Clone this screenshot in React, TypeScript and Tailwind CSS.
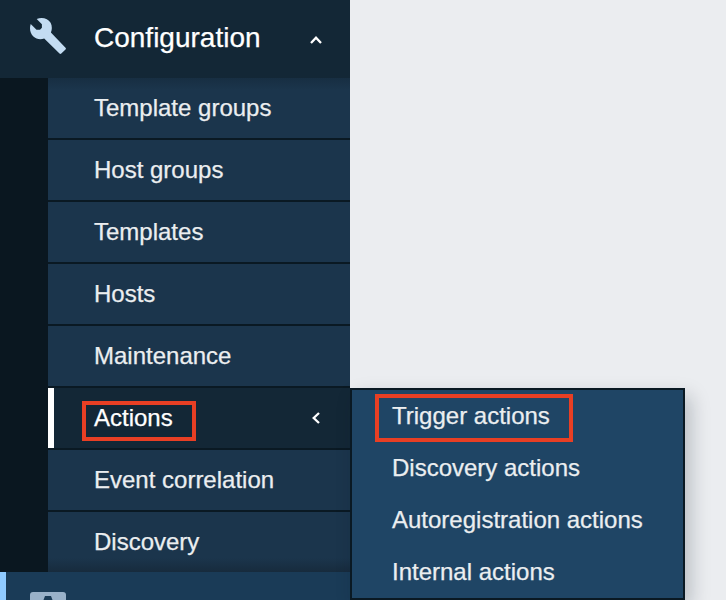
const before = ['Template groups', 'Host groups', 'Templates', 'Hosts', 'Maintenance'];
const actions = ['Discovery actions', 'Autoregistration actions', 'Internal actions'];

function Wrench() {
  return (
    <svg className="block h-9 w-9" viewBox="0 0 36 36" fill="#c3dcf2" aria-hidden="true">
      <path d="M6.700 0.900C12-1 18 0.200 20.600 4.800C22.200 7.800 22.200 11.500 20.900 14.400L35.500 29.700Q36.400 30.600 35.500 31.500L31.300 35.500Q30.400 36.400 29.500 35.500L14.200 20.600C10.500 22 6.300 21.400 3.100 18.300C0 15.200-0.700 10.300 0.700 6L6.500 11.700H10L11.900 9.800V6.200Z" />
    </svg>
  );
}

function Row({ label }: { label: string }) {
  return (
    <div className="flex h-[62px] shrink-0 items-center border-b-2 border-[#0a1923] pl-[46px] text-[24px] leading-[30px] text-[#ebeef0]">
      {label}
    </div>
  );
}

export default function App() {
  return (
    <div className="flex h-[600px] w-[726px] overflow-hidden bg-[#ebedf0] font-['Liberation_Sans',Arial,sans-serif] [-webkit-text-stroke:0.25px_currentColor]">
      <nav className="flex h-[600px] w-[350px] shrink-0 flex-col overflow-hidden bg-[#1a3b57]">
        <div className="flex h-[78px] shrink-0 items-center bg-[#132736] pr-[27px] pl-[30px] text-white">
          <div className="mt-[-6px]"><Wrench /></div>
          <span className="mt-[-3px] ml-7 flex-1 text-[28px] leading-8">Configuration</span>
          <svg className="mt-1 h-3.5 w-3.5" viewBox="0 0 14 14" fill="none" stroke="white" strokeWidth="2.3" aria-hidden="true">
            <path d="M2 9L7 3.700L12 9" />
          </svg>
        </div>
        <div className="flex h-[494px] shrink-0 bg-[#0a1720]">
          <div className="ml-12 flex h-[494px] w-[302px] flex-col overflow-hidden bg-[linear-gradient(to_bottom,#172e42_0,#1b354c_12px,#1b354c_480px,#172b3d_494px)]">
            {before.map((label) => <Row key={label} label={label} />)}
            <div className="h-[62px] shrink-0 border-b-2 border-[#0a1923] bg-[#132736]">
              <div className="flex h-[60px] items-center border-l-[6px] border-white pr-[27px] pl-10 text-[24px] leading-[30px] text-white">
                <span className="relative flex-1">
                  Actions
                  <span className="absolute top-[-2px] left-[-12px] h-10 w-[114px] border-4 border-[#e83f24]" />
                </span>
                <svg className="h-3.5 w-3.5" viewBox="0 0 14 14" fill="none" stroke="white" strokeWidth="2.3" aria-hidden="true">
                  <path d="M10 2L4.700 7L10 12" />
                </svg>
              </div>
            </div>
            <Row label="Event correlation" />
            <Row label="Discovery" />
          </div>
        </div>
        <div className="flex h-7 shrink-0 items-end border-l-[6px] border-[#8fcaff] bg-[#1a3b57] pl-6">
          <svg className="block h-2 w-9" viewBox="0 0 36 8" aria-hidden="true">
            <path d="M3 0H33Q36 0 36 3V8H0V3Q0 0 3 0Z" fill="#99b1c9" />
            <path d="M13.500 8L15 4H21L22.500 8Z" fill="#1a3b57" />
          </svg>
        </div>
      </nav>
      <div className="mt-[388px] flex h-[212px] w-[335px] shrink-0 flex-col border-2 border-[#0a1923] bg-[#1f4565] pl-10 text-[24px] leading-[52px] text-[#ebeef0] shadow-[6px_8px_18px_#0a192338]">
        <div className="relative h-[52px] shrink-0">
          Trigger actions
          <span className="absolute top-1 left-[-17px] h-12 w-[198px] border-4 border-[#e83f24]" />
        </div>
        {actions.map((label) => <div className="h-[52px] shrink-0" key={label}>{label}</div>)}
      </div>
    </div>
  );
}
